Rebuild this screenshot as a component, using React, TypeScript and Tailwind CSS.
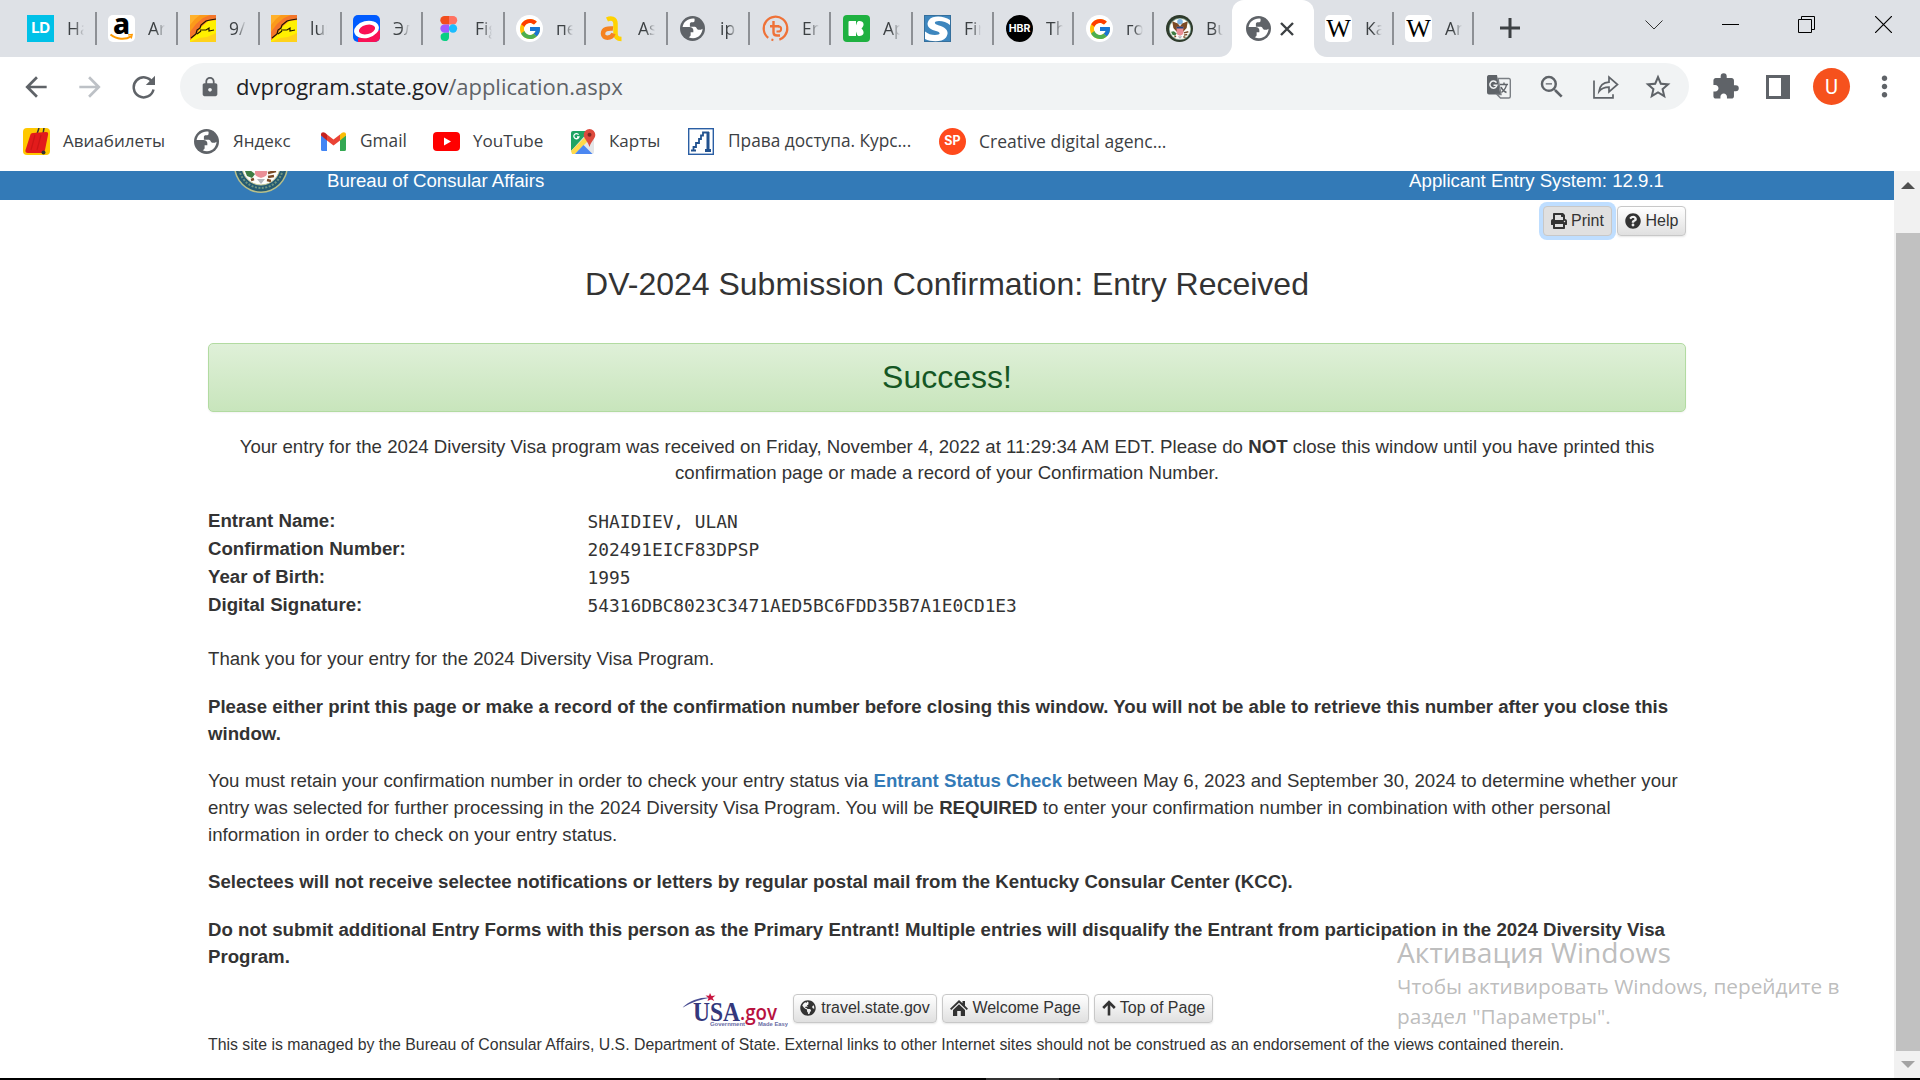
import React from "react";
import { FcGoogle } from "react-icons/fc";
import {
  MdArrowBack,
  MdArrowForward,
  MdLock,
  MdZoomOut,
  MdStarBorder,
  MdExtension,
  MdMoreVert,
} from "react-icons/md";
import { FaPrint, FaQuestionCircle, FaGlobeAmericas } from "react-icons/fa";

const Globe = ({ className }: { className?: string }) => (
  <svg viewBox="0 0 24 24" className={className ?? "size-[25px]"}>
    <circle cx="12" cy="12" r="12" fill="#5f6368" />
    <path
      d="M14 2.600C8 1.800 3.500 5.500 2.500 10.500h6.500c2.500 0 3.800 1.200 3.800 3.200v1.800h-2.600v2.700c0 1.200-.8 1.600-1.800 2.100 3.500 2 8.500 1.200 11.300-2.600 1.300-1.800 1.900-3.700 1.900-5.500-1 .9-2 1.100-3.300 1.100-2.200 0-2.200-2.800-4-3H9.500V7.500c0-1 .7-1.600 1.900-1.600h1.300c1 0 1.300-.8 1.300-1.600z"
      fill="#fff"
    />
  </svg>
);

const ThumbBoot = () => (
  <svg viewBox="0 0 26 27" className="h-[27px] w-[26px]">
    <rect width="26" height="27" fill="#fff000" />
    <path d="M0 0h26v3L16 5 9 11 4 21 0 25z" fill="#fb9a1a" />
    <path d="M0 0h10L5 4 0 10z" fill="#ffb12b" />
    <path d="M26 0v5l-8 1-7 6-5 8-6 5v-8l6-8 7-6 7-3z" fill="#f4762b" />
    <path d="M0 27l9-4 8-1 9-4v9z" fill="#ffd21a" />
    <path d="M1 23l5-4 1-4 3-2 1-3 5-4 4-1 6-1M10 15h6l3-2v3l5-1M7 19l4-3" stroke="#1c1400" strokeWidth="1.200" fill="none" />
  </svg>
);

const Seal = ({ className }: { className: string }) => (
  <svg viewBox="0 0 54 54" className={className}>
    <circle cx="27" cy="27" r="27" fill="#b9c08a" />
    <circle cx="27" cy="27" r="25.500" fill="#245a72" />
    <circle cx="27" cy="27" r="22" fill="none" stroke="#6f9580" strokeWidth="2" strokeDasharray="2 1.500" />
    <circle cx="27" cy="27" r="19" fill="#fdfdfb" stroke="#c5c893" strokeWidth="1" />
    <circle cx="27" cy="14" r="5" fill="#7fb4e0" />
    <path d="M27 22l-4-5-10-4 2 12 7 8h10l7-8 2-12-10 4z" fill="#7b4a25" />
    <path d="M21 23h12v11c0 3-3 4-6 5-3-1-6-2-6-5z" fill="#ea8f96" />
    <path d="M21 23h12v3H21z" fill="#26437c" />
    <path d="M11 32l5-1 5 4-3 4-5-2z" fill="#3e7d43" />
    <path d="M34 34l8-2M34 38l6-1M20 40l-3 1M33 41l4 1" stroke="#7b4a25" strokeWidth="2.500" />
    <path d="M23 40l4 5 4-5z" fill="#b4b7bc" />
  </svg>
);

const Wiki = () => (
  <span className="flex size-[27px] items-center justify-center rounded-[5px] bg-white font-['Liberation_Serif'] text-[26px] leading-none text-black">
    W
  </span>
);

const Google = () => (
  <span className="flex size-[27px] items-center justify-center rounded-full bg-white">
    <FcGoogle className="size-[24px]" />
  </span>
);

const Figma = () => (
  <svg viewBox="0 0 27 27" className="size-[27px]">
    <path d="M9.500 1h4.500v8.400H9.500a4.200 4.200 0 010-8.400z" fill="#f24e1e" />
    <path d="M14 1h4a4.200 4.200 0 010 8.400h-4z" fill="#ff7262" />
    <path d="M9.500 9.400H14v8.300H9.500a4.150 4.150 0 010-8.300z" fill="#a259ff" />
    <circle cx="18" cy="13.500" r="4.150" fill="#1abcfe" />
    <path d="M9.500 17.700H14v4.200a4.200 4.200 0 11-4.500-4.200z" fill="#0acf83" />
  </svg>
);

const Ozon = () => (
  <svg viewBox="0 0 27 27" className="size-[27px]">
    <defs>
      <clipPath id="ozonTile">
        <rect width="27" height="27" rx="5" />
      </clipPath>
    </defs>
    <g clipPath="url(#ozonTile)">
      <rect width="27" height="27" fill="#005bff" />
      <path d="M27 15L5 23v4h22z" fill="#f91155" />
      <ellipse cx="13.500" cy="14.500" rx="12.600" ry="8.400" fill="#fff" transform="rotate(-14 13.500 14.500)" />
      <ellipse cx="14" cy="14.500" rx="8.300" ry="4.600" fill="#f91155" transform="rotate(-14 14 14.500)" />
    </g>
  </svg>
);

const LetterA = () => (
  <svg viewBox="0 0 27 27" className="size-[27px]" fill="none">
    <path d="M9 4.500c4-2 8.500-1 8.500 4V18c0 4 1.500 6 6 6" stroke="#ffd200" strokeWidth="4.500" />
    <path d="M15 13.500c-5-.5-10 .5-10 5.200 0 5.300 8.500 5.300 10.500-.2" stroke="#f58220" strokeWidth="4.500" />
  </svg>
);

const RingT = () => (
  <svg viewBox="0 0 27 27" className="size-[27px]" fill="none" stroke="#ef7238">
    <circle cx="13.500" cy="13.500" r="11.800" strokeWidth="2.200" strokeDasharray="62 6 2 4" transform="rotate(128 13.500 13.500)" />
    <path d="M11.500 6v11.500c0 2 1.200 3 3.500 3h3M8 11.300h9" strokeWidth="2.400" />
    <path d="M16 11.300c4.200 0 4.200 5.200 0 5.200h-1.500" strokeWidth="2" />
  </svg>
);

const Kite = () => (
  <svg viewBox="0 0 27 27" className="size-[27px]">
    <rect width="27" height="27" rx="4" fill="#1fb141" />
    <path d="M6.500 6H13v4.500l1-3C14.500 6.500 15 6 16.500 6c4.500 0 5.500 4.500 2 7.500 3.500 3 2.500 7.500-2 7.500-1.500 0-2-.5-2.500-1.500l-1-3V21H6.500a1 1 0 01-1-1V7a1 1 0 011-1z" fill="#fff" />
  </svg>
);

const SBlue = () => (
  <svg viewBox="0 0 27 27" className="size-[27px]">
    <rect x=".5" y=".5" width="26" height="26" fill="#3d86be" stroke="#356f9c" />
    <path
      d="M26 5C20 1 9 0 5 5c-4 6 1 9.500 7 11 5 1.200 5 4-1 4-4 0-7-1-10-3.500V24c6 3 17 3.500 21-1.500 4-6 0-10-7-12C9 9 10 6 15 6c4 0 8 1.500 11 4z"
      fill="#fff"
    />
  </svg>
);

type Tab = { label: string; icon: React.ReactNode; box: string; sep?: boolean };

const tabs: Tab[] = [
  {
    label: "На",
    box: "w-[97px] pl-[27px]",
    icon: (
      <span className="flex size-[27px] items-center justify-center bg-[#00c1e8] font-['Inter'] text-[15px] font-bold tracking-tight text-white">
        LD
      </span>
    ),
  },
  {
    label: "Ar",
    box: "w-[81px] pl-[11px]",
    icon: (
      <span className="relative flex size-[27px] justify-center rounded-[5px] bg-white">
        <span className="font-['Noto_Sans'] text-[28px] leading-[17px] font-extrabold text-black">a</span>
        <svg viewBox="0 0 27 27" className="absolute inset-0 size-[27px]" fill="none" stroke="#ff9900">
          <path d="M2.500 19.500c6 5 15 5.500 20.500 1.800" strokeWidth="2" />
          <path d="M20 19.800l4.200-.3-1 4" strokeWidth="1.300" />
        </svg>
      </span>
    ),
  },
  { label: "9/", box: "w-[82px] pl-[12px]", icon: <ThumbBoot /> },
  { label: "lum", box: "w-[82px] pl-[11px]", icon: <ThumbBoot /> },
  { label: "Эл", box: "w-[81px] pl-[11px]", icon: <Ozon /> },
  { label: "Fig", box: "w-[82px] pl-[12px]", icon: <Figma /> },
  { label: "пе", box: "w-[81px] pl-[11px]", icon: <Google /> },
  { label: "As", box: "w-[82px] pl-[12px]", icon: <LetterA /> },
  { label: "ip", box: "w-[82px] pl-[12px]", icon: <Globe className="mr-[2px] size-[25px]" /> },
  { label: "Er", box: "w-[81px] pl-[12px]", icon: <RingT /> },
  { label: "Ap", box: "w-[82px] pl-[12px]", icon: <Kite /> },
  { label: "Fin", box: "w-[81px] pl-[11px]", icon: <SBlue /> },
  {
    label: "Th",
    box: "w-[80px] pl-[12px]",
    icon: (
      <span className="flex size-[27px] items-center justify-center rounded-full bg-black font-['Inter'] text-[10.500px] font-bold text-white">
        HBR
      </span>
    ),
  },
  { label: "го", box: "w-[80px] pl-[12px]", icon: <Google /> },
  {
    label: "Bu",
    box: "w-[78px] pl-[12px]",
    sep: false,
    icon: (
      <span className="flex size-[27px] items-center justify-center rounded-full bg-[#2f3b2c]">
        <span className="flex size-[22px] items-center justify-center overflow-hidden rounded-full">
          <Seal className="size-[30px] shrink-0" />
        </span>
      </span>
    ),
  },
];

const tabsAfter: Tab[] = [
  { label: "Ка", box: "w-[80px] pl-[11px]", icon: <Wiki /> },
  { label: "An", box: "w-[80px] pl-[11px]", icon: <Wiki /> },
];

const TabItem = ({ label, box, icon, sep = true }: Tab) => (
  <div className={`flex h-full shrink-0 items-center ${box}`}>
    <span className="shrink-0">{icon}</span>
    <span className="mr-auto ml-[13px] w-[17px] overflow-hidden text-[17.500px] whitespace-nowrap text-[#3c4043] [mask-image:linear-gradient(to_right,#000_45%,transparent)]">
      {label}
    </span>
    {sep && <span className="h-[33px] w-[2px] bg-[#8d9095]" />}
  </div>
);

const TabStrip = () => (
  <div className="flex h-[57px] bg-[#dee1e6]">
    {tabs.map((t, i) => (
      <TabItem key={i} {...t} />
    ))}
    <div className="relative flex w-[82px] shrink-0 items-center rounded-t-[12px] bg-white pl-[14px]">
      <svg viewBox="0 0 13 13" className="absolute bottom-0 -left-[13px] size-[13px]">
        <path d="M13 0v13H0A13 13 0 0013 0z" fill="#fff" />
      </svg>
      <svg viewBox="0 0 13 13" className="absolute -right-[13px] bottom-0 size-[13px]">
        <path d="M0 0v13h13A13 13 0 010 0z" fill="#fff" />
      </svg>
      <Globe />
      <svg viewBox="0 0 14 14" className="ml-[9px] size-[14px]" stroke="#3c4043" strokeWidth="2.400">
        <path d="M1 1l12 12M13 1L1 13" />
      </svg>
    </div>
    {tabsAfter.map((t, i) => (
      <TabItem key={i} {...t} />
    ))}
    <div className="flex flex-1 items-start">
      <svg viewBox="0 0 20 20" className="mt-[18px] ml-[26px] size-[20px]" stroke="#3c4043" strokeWidth="3">
        <path d="M10 0v20M0 10h20" />
      </svg>
      <svg viewBox="0 0 18 10" className="mt-[20px] ml-[125px] h-[10px] w-[18px]" fill="none" stroke="#333">
        <path d="M.5 .5l8.500 8.500L17.500 .5" />
      </svg>
      <span className="mt-[24px] ml-[59px] h-px w-[17px] bg-black" />
      <svg viewBox="0 0 17 17" className="mt-[16px] ml-[59px] size-[17px]" fill="none" stroke="#000">
        <path d="M.5 3.500h13v13H.5zM3.500 3V.5h13v13H14" />
      </svg>
      <svg viewBox="0 0 17 17" className="mt-[16px] ml-[60px] size-[17px]" stroke="#000" strokeWidth="1.200">
        <path d="M0 0l17 17M17 0L0 17" />
      </svg>
    </div>
  </div>
);

const Toolbar = () => (
  <div className="flex h-[59px] items-center text-[#5f6368]">
    <MdArrowBack className="ml-[20px] size-[32px]" />
    <MdArrowForward className="ml-[22px] size-[32px] text-[#bdc1c6]" />
    <svg viewBox="0 0 24 24" className="ml-[26px] size-[24px]" fill="none">
      <path d="M20.500 7.500A10 10 0 1021.500 14.500" stroke="#5f6368" strokeWidth="2.500" />
      <path d="M23 .8v9.200h-9.200z" fill="#5f6368" />
    </svg>
    <div className="ml-[24px] flex h-[47px] w-[1509px] items-center rounded-full bg-[#f1f3f4]">
      <MdLock className="ml-[19px] size-[22px]" />
      <span className="ml-[15px] text-[22px] text-[#202124]">
        dvprogram.state.gov<span className="text-[#5f6368]">/application.aspx</span>
      </span>
      <svg viewBox="0 0 24 24" className="ml-auto size-[24px]">
        <path d="M1.500 0H10l3.500 19.500H2A2 2 0 010 17.500V2A2 2 0 011.500 0z" fill="#5f6368" />
        <path d="M11 3.500h11a1.500 1.500 0 011.300 1.500v16.500a1.500 1.500 0 01-1.500 1.500h-8.300L10 19.500h4z" fill="none" stroke="#7b7f84" strokeWidth="1.400" />
        <path d="M9.500 7.600a3.600 3.600 0 10.500 2.600H6.500" fill="none" stroke="#f1f3f4" strokeWidth="1.500" />
        <path d="M13 9.500h8M17 7.500v2M19.500 9.500c-.5 3.500-2.500 6-5 8M14 12c1 2.500 3 4.500 5.500 5.500" fill="none" stroke="#5f6368" strokeWidth="1.400" />
      </svg>
      <MdZoomOut className="ml-[26px] size-[30px]" />
      <svg viewBox="0 0 26 24" className="ml-[26px] h-[24px] w-[26px]" fill="none" stroke="#5f6368" strokeWidth="1.700">
        <path d="M1 5.500v17.300h19v-3.500" />
        <path d="M6 16.500c.8-6 4.500-9 10-9.300V2.200l8.500 7.300-8.500 7.300v-4.600c-4.500 0-7.500 1-10 4.300z" />
      </svg>
      <MdStarBorder className="mr-[16px] ml-[24px] size-[30px]" />
    </div>
    <MdExtension className="ml-[22px] size-[29px]" />
    <div className="ml-[26px] flex size-[24px] justify-start bg-[#5f6368] p-[3px]">
      <span className="h-full w-[12px] bg-white" />
    </div>
    <span className="ml-[23px] flex size-[37px] items-center justify-center rounded-full bg-[#f6511d] font-['Roboto'] text-[20px] text-white">
      U
    </span>
    <MdMoreVert className="ml-[18px] size-[33px]" />
  </div>
);

const Bookmarks = () => (
  <div className="flex h-[55px] items-center pb-[5px] text-[17.300px] whitespace-nowrap text-[#3c4043]">
    <svg viewBox="0 0 27 27" className="ml-[23px] size-[27px]">
      <rect width="27" height="27" rx="4" fill="#ffc800" />
      <path d="M14 6l2-6M20 6l1-6" stroke="#333" strokeWidth="1.500" />
      <path d="M10 5l13-1c2 0 2.500 1 2 3L22 22c-.5 2-1.500 3-3.500 3H5c-2 0-3-1-2.500-3L7 8c.5-2 1-3 3-3z" fill="#e21b1b" />
      <path d="M12 7L8 22M18 7l-4 15" stroke="#cc1616" strokeWidth="1.200" />
      <circle cx="20.500" cy="24.500" r="2" fill="#333" />
    </svg>
    <span className="ml-[13px] w-[103px] text-[17px]">Авиабилеты</span>
    <Globe className="ml-[28px] size-[25px]" />
    <span className="ml-[14px] w-[59px] text-[17px]">Яндекс</span>
    <svg viewBox="0 0 25 19" className="ml-[29px] h-[19px] w-[25px]">
      <path d="M0 3v14.500A1.500 1.500 0 001.500 19H6V7.500z" fill="#4285f4" />
      <path d="M25 3v14.500a1.500 1.500 0 01-1.500 1.500H19V7.500z" fill="#34a853" />
      <path d="M0 3.500V2.500C0 .5 2 -.5 4 .8L6 2.500V8.500z" fill="#c5221f" />
      <path d="M25 3.500V2.500c0-2-2-3-4-1.700L19 2.500V8.500z" fill="#fbbc04" />
      <path d="M6 2.400L12.500 7.500 19 2.400v6.200L12.500 13.500 6 8.600z" fill="#ea4335" />
    </svg>
    <span className="ml-[14px] w-[46px]">Gmail</span>
    <svg viewBox="0 0 27 19" className="ml-[27px] h-[19px] w-[27px]">
      <rect width="27" height="19" rx="4" fill="#f00" />
      <path d="M11 5.500l7 4-7 4z" fill="#fff" />
    </svg>
    <span className="ml-[13px] w-[71px] text-[17.100px]">YouTube</span>
    <svg viewBox="0 0 25 25" className="ml-[27px] size-[25px]">
      <path d="M2 2h19a2 2 0 012 2v19a2 2 0 01-2 2H2z" fill="#e4e6e8" />
      <path d="M2 2h16L0 22V4a2 2 0 012-2z" fill="#1fa463" />
      <path d="M0 22L17 5l3 4L4 25H1z" fill="#ffd94a" />
      <path d="M4 25l8.500-9 9 9z" fill="#4b87f1" />
      <path d="M18.500 0a5.800 5.800 0 015.800 5.800c0 4-4 6-5.800 12.200-1.800-6.200-5.800-8.200-5.800-12.200A5.800 5.800 0 0118.500 0z" fill="#dd4b3e" />
      <circle cx="18.500" cy="5.800" r="2" fill="#7c2a23" />
      <path d="M7.600 5.700a2.600 2.600 0 10.300 2.300H6" fill="none" stroke="#fff" strokeWidth="1.300" />
    </svg>
    <span className="ml-[13px] w-[51px] text-[17px]">Карты</span>
    <svg viewBox="0 0 26 27" className="ml-[28px] h-[27px] w-[26px]" fill="none">
      <rect x=".7" y=".7" width="24.600" height="25.600" fill="#fff" stroke="#2a5ea4" strokeWidth="1.400" />
      <path d="M3 22.500h5M5.500 22v-3H8v-4h3v-4h2V7.500h2V4.500h6" stroke="#22528f" strokeWidth="1.800" />
      <path d="M20 4v18.500M17 22.500h6" stroke="#22528f" strokeWidth="3" />
    </svg>
    <span className="ml-[14px] w-[184px]">Права доступа. Курс...</span>
    <span className="ml-[27px] flex size-[27px] items-center justify-center rounded-full bg-[#ff4a1c] font-['Inter'] text-[12.500px] font-bold text-white">
      SP
    </span>
    <span className="ml-[13px] text-[17.500px]">Creative digital agenc...</span>
  </div>
);

const PageButton = ({ children, box, active = false }: { children: React.ReactNode; box: string; active?: boolean }) => (
  <button
    className={`flex items-center justify-center rounded-[4px] border border-[#c8c8c8] text-[16px] leading-none whitespace-nowrap text-[#333] ${box} ${
      active
        ? "bg-[#e0e0e0] ring-4 ring-[#bfdeff]"
        : "bg-linear-to-b from-white to-[#e0e0e0] shadow-[0_1px_2px_rgba(0,0,0,0.1)]"
    }`}
  >
    {children}
  </button>
);

const rows = [
  ["Entrant Name:", "SHAIDIEV, ULAN"],
  ["Confirmation Number:", "202491EICF83DPSP"],
  ["Year of Birth:", "1995"],
  ["Digital Signature:", "54316DBC8023C3471AED5BC6FDD35B7A1E0CD1E3"],
];

const UsaGov = () => (
  <svg viewBox="0 0 106 36" className="h-[36px] w-[106px]">
    <path d="M0 15C8 7 18 4 29 4.500 20 6 10 9 0 15z" fill="#4b4f93" />
    <path d="M28 0l1.500 3 4-.5-3 2.500 1.800 3L29 6.500 25.500 8l1-3L23.500 2.500l3.500.3z" fill="#c8153f" />
    <text x="11" y="27.500" fontFamily="Liberation Serif" fontWeight="700" fontSize="28" textLength="47" lengthAdjust="spacingAndGlyphs" fill="#34387c">
      USA
    </text>
    <text x="58" y="27" fontFamily="Open Sans" fontWeight="600" fontSize="22" textLength="37" lengthAdjust="spacingAndGlyphs" fill="#b8123f">
      .gov
    </text>
    <text x="28" y="32.500" fontFamily="Liberation Sans" fontWeight="700" fontSize="5" textLength="35" lengthAdjust="spacingAndGlyphs" fill="#6a6da5">
      Government
    </text>
    <text x="76" y="32.500" fontFamily="Liberation Sans" fontWeight="700" fontSize="5" textLength="30" lengthAdjust="spacingAndGlyphs" fill="#6a6da5">
      Made Easy
    </text>
  </svg>
);

const Page = () => (
  <main className="flex h-[907px] w-[1894px] flex-col overflow-hidden bg-white font-['Liberation_Sans'] text-[18.655px] leading-[26.600px] text-[#333]">
    <header className="flex h-[29px] shrink-0 items-start overflow-hidden bg-[#337ab7] pr-[230px] pl-[234px] leading-[20px] text-white">
      <Seal className="-mt-[32px] size-[54px] shrink-0" />
      <span className="ml-[39px]">Bureau of Consular Affairs</span>
      <span className="ml-auto">Applicant Entry System: 12.9.1</span>
    </header>
    <div className="ml-[208px] flex w-[1478px] flex-col">
      <div className="mt-[6px] flex justify-end gap-[5px]">
        <PageButton active box="h-[30px] w-[69px] gap-[4px] pb-px">
          <FaPrint className="size-[16px]" />
          Print
        </PageButton>
        <PageButton box="h-[30px] w-[69px] gap-[5px] pb-px">
          <FaQuestionCircle className="size-[16px]" />
          Help
        </PageButton>
      </div>
      <h1 className="mt-[30px] text-center text-[32px] leading-[36px]">DV-2024 Submission Confirmation: Entry Received</h1>
      <div className="mt-[41px] h-[69px] rounded-[5px] border border-[#b2dba1] bg-linear-to-b from-[#dff0d8] to-[#c8e5bc] text-center text-[32px] leading-[66px] text-[#155724] shadow-[0_1px_2px_rgba(0,0,0,0.05)]">
        Success!
      </div>
      <p className="mt-[21.500px] px-[20px] text-center">
        Your entry for the 2024 Diversity Visa program was received on Friday, November 4, 2022 at 11:29:34 AM EDT. Please do{" "}
        <b>NOT</b> close this window until you have printed this
        <br />
        confirmation page or made a record of your Confirmation Number.
      </p>
      <dl className="mt-[20.500px] leading-[28px]">
        {rows.map(([k, v]) => (
          <div key={k} className="flex h-[28px]">
            <dt className="w-[379.500px] font-bold">{k}</dt>
            <dd className="pt-px font-['DejaVu_Sans_Mono'] text-[17.830px]">{v}</dd>
          </div>
        ))}
      </dl>
      <div className="mt-[27px] flex flex-col gap-[21.200px] whitespace-nowrap">
        <p>Thank you for your entry for the 2024 Diversity Visa Program.</p>
        <p className="font-bold">
          Please either print this page or make a record of the confirmation number before closing this window. You will not be able to retrieve this number after you close this
          <br />
          window.
        </p>
        <p>
          You must retain your confirmation number in order to check your entry status via{" "}
          <b className="text-[#337ab7]">Entrant Status Check</b> between May 6, 2023 and September 30, 2024 to determine whether your
          <br />
          entry was selected for further processing in the 2024 Diversity Visa Program. You will be <b>REQUIRED</b> to enter your confirmation number in combination with other personal
          <br />
          information in order to check on your entry status.
        </p>
        <p className="font-bold">
          Selectees will not receive selectee notifications or letters by regular postal mail from the Kentucky Consular Center (KCC).
        </p>
        <p className="font-bold">
          Do not submit additional Entry Forms with this person as the Primary Entrant! Multiple entries will disqualify the Entrant from participation in the 2024 Diversity Visa
          <br />
          Program.
        </p>
      </div>
      <div className="mt-[22.500px] flex items-start pl-[474px]">
        <UsaGov />
        <div className="mt-px ml-[5px] flex gap-[5px]">
          <PageButton box="h-[29px] w-[144px] gap-[5px] pb-px">
            <FaGlobeAmericas className="size-[16px]" />
            travel.state.gov
          </PageButton>
          <PageButton box="h-[29px] w-[147px] gap-[4px] pb-px">
            <svg viewBox="0 0 18 16" className="h-[16px] w-[18px]" fill="#333">
              <path d="M9 0l3.500 3.300V1H15v4.800l3 3-1.300 1.300L9 2.800 1.300 10.100 0 8.800z" />
              <path d="M9 4.300l6 5.700v6h-4.200v-5H7.200v5H3v-6z" />
            </svg>
            Welcome Page
          </PageButton>
          <PageButton box="h-[29px] w-[119px] gap-[4px] pb-px">
            <svg viewBox="0 0 14 16" className="h-[16px] w-[14px]" fill="none" stroke="#333" strokeWidth="2.600">
              <path d="M7 15.500V2.500M1.200 8L7 2.200 12.800 8" />
            </svg>
            Top of Page
          </PageButton>
        </div>
      </div>
      <p className="mt-[4px] text-[15.855px] leading-[24px] whitespace-nowrap">
        This site is managed by the Bureau of Consular Affairs, U.S. Department of State. External links to other Internet sites should not be construed as an endorsement of the views contained therein.
      </p>
    </div>
  </main>
);

const Scrollbar = () => (
  <div className="flex h-[907px] w-[26px] flex-col items-end bg-[#f1f1f1]">
    <svg viewBox="0 0 24 62" className="h-[62px] w-[24px] shrink-0">
      <path d="M5 18l7-7 7 7z" fill="#505050" />
    </svg>
    <div className="w-[24px] flex-1 bg-[#c1c1c1]" />
    <svg viewBox="0 0 24 27" className="h-[27px] w-[24px] shrink-0">
      <path d="M5 10h14l-7 7z" fill="#a3a3a3" />
    </svg>
  </div>
);

export default function App() {
  return (
    <div className="relative flex h-[1080px] w-[1920px] flex-col overflow-hidden bg-white font-['Open_Sans',sans-serif]">
      <TabStrip />
      <Toolbar />
      <Bookmarks />
      <div className="flex">
        <Page />
        <Scrollbar />
      </div>
      <div className="flex h-[2px] bg-black">
        <span className="ml-[986px] w-[73px] bg-[#333]" />
      </div>
      <div className="absolute top-[934px] left-[1397px] text-[20.800px] leading-[30px] whitespace-nowrap text-[#b5b5b5]/90">
        <div className="mb-px text-[28.200px] leading-[36px]">Активация Windows</div>
        Чтобы активировать Windows, перейдите в
        <br />
        раздел "Параметры".
      </div>
    </div>
  );
}
